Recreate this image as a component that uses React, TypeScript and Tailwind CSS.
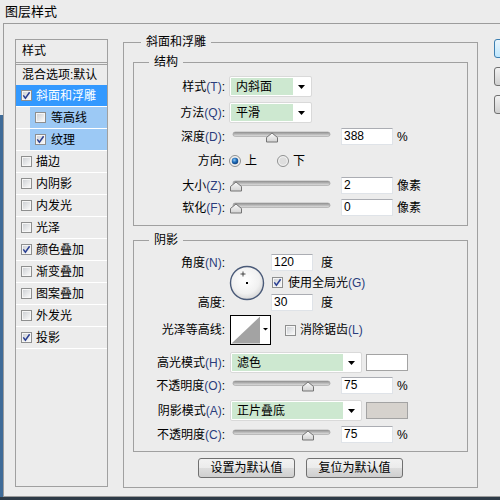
const FONT = "font-['Liberation_Sans','Noto_Sans_CJK_SC',sans-serif]"

const CheckBox = ({ checked }: { checked?: boolean }) => (
  <svg width="11" height="11" viewBox="0 0 11 11" className="shrink-0">
    <defs>
      <linearGradient id="cbg" x1="0" y1="0" x2="1" y2="1">
        <stop offset="0" stopColor="#cfd2d6" />
        <stop offset="1" stopColor="#f8f8f8" />
      </linearGradient>
    </defs>
    <rect x="0.5" y="0.5" width="10" height="10" fill="#f6f6f6" stroke="#8e8f8f" />
    <rect x="2" y="2" width="7" height="7" fill="url(#cbg)" />
    {checked && (
      <path d="M2.3 5.4 L4.4 8.2 L8.6 2.3" fill="none" stroke="#2a3f92" strokeWidth="1.5" />
    )}
  </svg>
)

const Radio = ({ checked }: { checked?: boolean }) => (
  <svg width="12" height="12" viewBox="0 0 12 12" className="shrink-0">
    <defs>
      <radialGradient id="rdot" cx="0.4" cy="0.35" r="0.7">
        <stop offset="0" stopColor="#8fc8f4" />
        <stop offset="0.5" stopColor="#1f6cb8" />
        <stop offset="1" stopColor="#0d3d7a" />
      </radialGradient>
    </defs>
    <circle cx="6" cy="6" r="5.5" fill="#f2f2f2" stroke="#8e8f8f" />
    <circle cx="6" cy="6" r="3.8" fill="#dedede" />
    {checked && <circle cx="6" cy="6" r="3.2" fill="url(#rdot)" />}
  </svg>
)

const Slider = ({ pos }: { pos: number }) => (
  <svg width="102" height="17" viewBox="0 0 102 17" className="shrink-0">
    <defs>
      <linearGradient id="trk" x1="0" y1="0" x2="0" y2="1">
        <stop offset="0" stopColor="#8e8e8e" />
        <stop offset="1" stopColor="#e4e4e4" />
      </linearGradient>
      <linearGradient id="thm" x1="0" y1="0" x2="0" y2="1">
        <stop offset="0" stopColor="#fbfbfb" />
        <stop offset="1" stopColor="#d2d2d2" />
      </linearGradient>
    </defs>
    <rect x="4" y="4" width="97" height="4.5" rx="2.2" fill="url(#trk)" stroke="#9a9a9a" strokeWidth="0.6" />
    <path
      d={`M${pos} 5 L${pos + 5.5} 9.5 L${pos + 5.5} 14 L${pos - 5.5} 14 L${pos - 5.5} 9.5 Z`}
      fill="url(#thm)"
      stroke="#747474"
    />
  </svg>
)

const Arrow = () => (
  <svg width="7" height="4" viewBox="0 0 7 4">
    <path d="M0 0 H7 L3.5 4 Z" fill="#000" />
  </svg>
)

const Combo = ({ w, text }: { w: string; text: string }) => (
  <div className={`flex h-[21px] shrink-0 rounded-[2px] border border-[#d9d9d9] bg-white p-[1px] ${w}`}>
    <div className="flex flex-1 items-center bg-[#cde8d0] pl-[5px]">{text}</div>
    <div className="flex w-[17px] items-center justify-center">
      <Arrow />
    </div>
  </div>
)

const Field = ({ w, value }: { w: string; value: string }) => (
  <div
    className={`h-[17px] shrink-0 border border-[#dfe3e8] border-t-[#abadb3] bg-white pl-[2px] text-[12px] leading-[15px] ${w}`}
  >
    {value}
  </div>
)

const Label = ({ text, m }: { text: string; m?: string }) => (
  <span className="w-[91px] shrink-0 text-right">
    {text}
    {m && <span className="text-[#2a3c7c]">({m})</span>}:
  </span>
)

const Swatch = ({ color }: { color: string }) => (
  <div className={`ml-[4px] h-[17px] w-[42px] border border-[#a3a3a3] ${color}`} />
)

const styles = [
  { t: '斜面和浮雕', c: true, main: true },
  { t: '等高线', sub: true },
  { t: '纹理', c: true, sub: true },
  { t: '描边' },
  { t: '内阴影' },
  { t: '内发光' },
  { t: '光泽' },
  { t: '颜色叠加', c: true },
  { t: '渐变叠加' },
  { t: '图案叠加' },
  { t: '外发光' },
  { t: '投影', c: true },
]

const StyleList = () => (
  <div className="ml-[11px] mt-[15px] flex h-[448px] w-[93px] shrink-0 flex-col border border-[#a0a0a0]">
    <div className="flex h-[22px] items-center pl-[6px]">样式</div>
    <div className="h-[3px] border-y border-[#a0a0a0]" />
    <div className="flex h-[20px] items-center pl-[6px]">混合选项:默认</div>
    {styles.map((s) =>
      s.sub ? (
        <div key={s.t} className="flex h-[22px] border-b border-white pl-[14px]">
          <div className="flex flex-1 items-center gap-[5px] bg-[#9cc9f5] pl-[5px]">
            <CheckBox checked={s.c} />
            <span>{s.t}</span>
          </div>
        </div>
      ) : (
        <div
          key={s.t}
          className={`flex h-[22px] items-center gap-[4px] border-b border-white pl-[5px] ${
            s.main ? 'bg-[#3399ff] text-white' : ''
          }`}
        >
          <CheckBox checked={s.c} />
          <span>{s.t}</span>
        </div>
      )
    )}
  </div>
)

const Dial = () => (
  <svg width="36" height="36" viewBox="0 0 36 36" className="ml-[4px] shrink-0 self-center">
    <defs>
      <radialGradient id="dial" cx="0.45" cy="0.4" r="0.6">
        <stop offset="0" stopColor="#ffffff" />
        <stop offset="0.7" stopColor="#f1f1f1" />
        <stop offset="1" stopColor="#d8d8d8" />
      </radialGradient>
    </defs>
    <circle cx="18" cy="18" r="16.5" fill="url(#dial)" stroke="#4a5a78" strokeWidth="1.4" />
    <rect x="17" y="17" width="2" height="2" fill="#000" />
    <path d="M11.5 9 H16.5 M14 6.5 V11.5" stroke="#222" strokeWidth="0.8" />
  </svg>
)

const Contour = () => (
  <svg width="41" height="30" viewBox="0 0 41 30" className="ml-[5px] shrink-0">
    <rect x="0.5" y="0.5" width="40" height="29" fill="#fff" stroke="#000" />
    <path d="M1.5 28.5 L30 1.5 L30 28.5 Z" fill="#a3a3a3" />
    <path d="M33 13 H38 L35.5 15.5 Z" fill="#000" />
  </svg>
)

const Button = ({ text }: { text: string }) => (
  <div className="flex h-[20px] w-[97px] items-center justify-center rounded-[3px] border border-[#707070] bg-[linear-gradient(#f2f2f2_0%,#ebebeb_50%,#dddddd_51%,#cfcfcf_100%)]">
    {text}
  </div>
)

export default function App() {
  return (
    <div className={`flex h-[500px] w-[500px] flex-col overflow-hidden bg-[#ececec] text-[12px] leading-[16px] text-black ${FONT}`}>
      <div className="flex h-[23px] shrink-0 items-center pl-[5px] text-[13px]">图层样式</div>
      <div className="flex flex-1">
        <div className="flex w-[3px] shrink-0 flex-col">
          <div className="h-[92px]" />
          <div className="flex-1 bg-[#3f6b98]" />
        </div>
        <div className="flex flex-1 items-start border-y border-l border-[#9c9c9c]">
          <StyleList />

          <fieldset className="ml-[15px] mt-[10px] w-[355px] shrink-0 border border-[#a0a0a0] px-[9px] pb-[9px] pt-[4px]">
            <legend className="ml-[8px] px-[5px] leading-[16px]">斜面和浮雕</legend>

            <fieldset className="border border-[#a0a0a0] pb-[9px] pt-[6px]">
              <legend className="ml-[15px] px-[5px] leading-[16px]">结构</legend>
              <div className="flex h-[21px] items-center">
                <Label text="样式" m="T" />
                <div className="ml-[4px]">
                  <Combo w="w-[83px]" text="内斜面" />
                </div>
              </div>
              <div className="mt-[5px] flex h-[21px] items-center">
                <Label text="方法" m="Q" />
                <div className="ml-[4px]">
                  <Combo w="w-[83px]" text="平滑" />
                </div>
              </div>
              <div className="mt-[5px] flex h-[17px] items-center">
                <Label text="深度" m="D" />
                <div className="ml-[4px]">
                  <Slider pos={43} />
                </div>
                <div className="ml-[10px]">
                  <Field w="w-[52px]" value="388" />
                </div>
                <span className="ml-[4px]">%</span>
              </div>
              <div className="mt-[7px] flex h-[17px] items-center">
                <Label text="方向" />
                <div className="ml-[4px] flex items-center gap-[4px]">
                  <Radio checked />
                  <span>上</span>
                </div>
                <div className="ml-[20px] flex items-center gap-[4px]">
                  <Radio />
                  <span>下</span>
                </div>
              </div>
              <div className="mt-[8px] flex h-[17px] items-center">
                <Label text="大小" m="Z" />
                <div className="ml-[4px]">
                  <Slider pos={7} />
                </div>
                <div className="ml-[10px]">
                  <Field w="w-[52px]" value="2" />
                </div>
                <span className="ml-[4px]">像素</span>
              </div>
              <div className="mt-[5px] flex h-[17px] items-center">
                <Label text="软化" m="F" />
                <div className="ml-[4px]">
                  <Slider pos={7} />
                </div>
                <div className="ml-[10px]">
                  <Field w="w-[52px]" value="0" />
                </div>
                <span className="ml-[4px]">像素</span>
              </div>
            </fieldset>

            <fieldset className="mt-[6px] border border-[#a0a0a0] pb-[8px] pt-[6px]">
              <legend className="ml-[15px] px-[5px] leading-[16px]">阴影</legend>
              <div className="flex h-[57px]">
                <div className="flex w-[91px] shrink-0 flex-col justify-between text-right">
                  <div className="flex h-[17px] items-center justify-end">
                    <Label text="角度" m="N" />
                  </div>
                  <div className="flex h-[17px] items-center justify-end">
                    <Label text="高度" />
                  </div>
                </div>
                <Dial />
                <div className="ml-[6px] flex flex-col justify-between">
                  <div className="flex h-[17px] items-center">
                    <Field w="w-[42px]" value="120" />
                    <span className="ml-[8px]">度</span>
                  </div>
                  <div className="flex items-center gap-[5px] pl-[1px]">
                    <CheckBox checked />
                    <span>
                      使用全局光<span className="text-[#2a3c7c]">(G)</span>
                    </span>
                  </div>
                  <div className="flex h-[17px] items-center">
                    <Field w="w-[42px]" value="30" />
                    <span className="ml-[8px]">度</span>
                  </div>
                </div>
              </div>
              <div className="mt-[4px] flex h-[30px] items-center">
                <Label text="光泽等高线" />
                <Contour />
                <div className="ml-[14px] flex items-center gap-[4px]">
                  <CheckBox />
                  <span>
                    消除锯齿<span className="text-[#2a3c7c]">(L)</span>
                  </span>
                </div>
              </div>
              <div className="mt-[7px] flex h-[21px] items-center">
                <Label text="高光模式" m="H" />
                <div className="ml-[5px]">
                  <Combo w="w-[132px]" text="滤色" />
                </div>
                <Swatch color="bg-white" />
              </div>
              <div className="mt-[4px] flex h-[17px] items-center">
                <Label text="不透明度" m="O" />
                <div className="ml-[4px]">
                  <Slider pos={79} />
                </div>
                <div className="ml-[10px]">
                  <Field w="w-[52px]" value="75" />
                </div>
                <span className="ml-[4px]">%</span>
              </div>
              <div className="mt-[6px] flex h-[21px] items-center">
                <Label text="阴影模式" m="A" />
                <div className="ml-[5px]">
                  <Combo w="w-[132px]" text="正片叠底" />
                </div>
                <Swatch color="bg-[#d6d2cd]" />
              </div>
              <div className="mt-[5px] flex h-[17px] items-center">
                <Label text="不透明度" m="C" />
                <div className="ml-[4px]">
                  <Slider pos={79} />
                </div>
                <div className="ml-[10px]">
                  <Field w="w-[52px]" value="75" />
                </div>
                <span className="ml-[4px]">%</span>
              </div>
            </fieldset>

            <div className="mt-[6px] flex justify-center gap-[11px]">
              <Button text="设置为默认值" />
              <Button text="复位为默认值" />
            </div>
          </fieldset>

          <div className="ml-[16px] mt-[15px] flex shrink-0 flex-col gap-[9px]">
            <div className="h-[19px] w-[75px] rounded-[3px] border border-[#3c7fb1] bg-[linear-gradient(#eaf6fd,#bee6fd)]" />
            <div className="h-[19px] w-[75px] rounded-[3px] border border-[#707070] bg-[linear-gradient(#f2f2f2,#d0d0d0)]" />
            <div className="h-[19px] w-[75px] rounded-[3px] border border-[#707070] bg-[linear-gradient(#f2f2f2,#d0d0d0)]" />
          </div>
        </div>
      </div>
      <div className="h-[3px] shrink-0 bg-[#2d3a47]" />
    </div>
  )
}
